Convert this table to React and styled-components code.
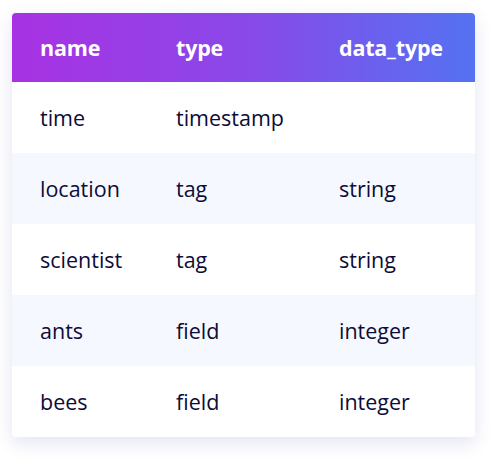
import React from "react"
import styled, { createGlobalStyle } from "styled-components"

const GlobalStyle = createGlobalStyle`
  body {
    margin: 0;
    background: #ffffff;
    font-family: "Open Sans", "Noto Sans", sans-serif;
  }
`

const Page = styled.div`
  padding: 13px 17px 25px 12px;
`

const Card = styled.div`
  width: 463px;
  border-radius: 4px;
  overflow: hidden;
  background: white;
  box-shadow: 0 6px 18px rgba(60, 70, 160, 0.14);
`

const Table = styled.table`
  width: 100%;
  table-layout: fixed;
  border-collapse: collapse;
  border-spacing: 0;
`

const Head = styled.thead`
  background: linear-gradient(90deg, #a832e3 0%, #8a48e8 50%, #5472f2 100%);
`

const Th = styled.th`
  box-sizing: border-box;
  width: ${(p) => p.$w}px;
  height: 69px;
  padding: 0 0 0 28px;
  text-align: left;
  font: 700 21.5px "Open Sans", "Noto Sans", sans-serif;
  letter-spacing: -0.2px;
  color: #ffffff;
  white-space: nowrap;
`

const Row = styled.tr`
  background: ${(p) => (p.$alt ? "#f5f8fe" : "#ffffff")};
`

const Td = styled.td`
  height: 71px;
  padding: 0 0 0 28px;
  font: 400 21.5px "Open Sans", "Noto Sans", sans-serif;
  color: #0d0c38;
  white-space: nowrap;
`

const rows = [
  ["time", "timestamp", ""],
  ["location", "tag", "string"],
  ["scientist", "tag", "string"],
  ["ants", "field", "integer"],
  ["bees", "field", "integer"],
]

const App = () => (
  <>
    <GlobalStyle />
    <Page>
      <Card>
        <Table>
          <Head>
            <tr>
              <Th $w={136}>name</Th>
              <Th $w={163}>type</Th>
              <Th $w={164}>data_type</Th>
            </tr>
          </Head>
          <tbody>
            {rows.map((r, i) => (
              <Row key={r[0]} $alt={i % 2 === 1}>
                <Td>{r[0]}</Td>
                <Td>{r[1]}</Td>
                <Td>{r[2]}</Td>
              </Row>
            ))}
          </tbody>
        </Table>
      </Card>
    </Page>
  </>
)

export default App
